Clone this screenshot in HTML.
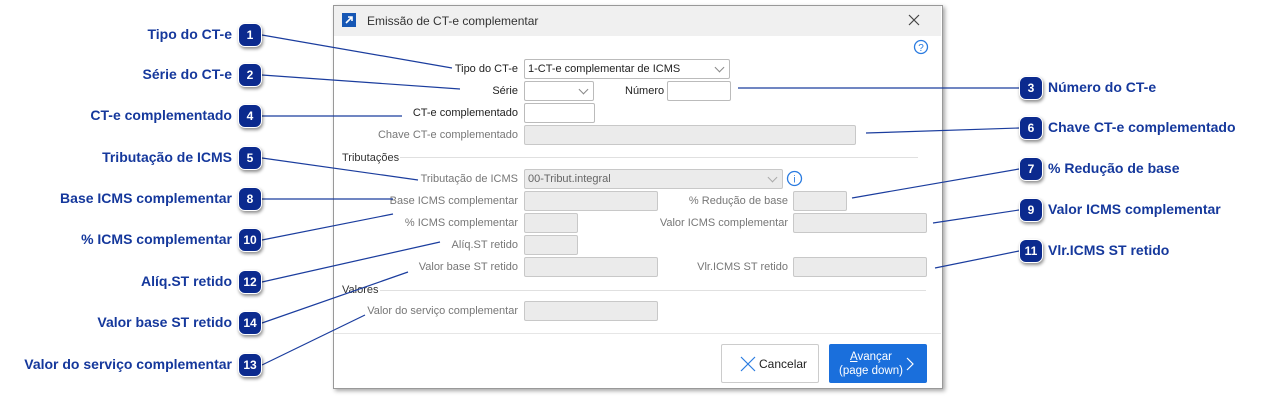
<!DOCTYPE html><html><head><meta charset="utf-8"><style>
body{margin:0;width:1261px;height:405px;background:#fff;position:relative;overflow:hidden;font-family:"Liberation Sans",sans-serif}
.a{position:absolute}
.b{position:absolute;width:22px;height:22px;border-radius:7px;background:#0b2a8e;color:#fff;font:bold 12px "Liberation Sans",sans-serif;text-align:center;line-height:22px;box-shadow:1px 2px 3px rgba(0,0,0,.45);border:1px solid #fff;z-index:3}
.ct{position:absolute;color:#15389c;font:bold 14px "Liberation Sans",sans-serif;white-space:nowrap}
.r{text-align:right;width:300px}
.l{position:absolute;font-size:11px;color:#222;text-align:right;width:200px;white-space:nowrap}
.d{color:#777}
.f{position:absolute;box-sizing:border-box;border:1px solid #c8c8c8;border-radius:2px;background:#ebebeb;height:20px}
.e{background:#fff;border-color:#bbb}
.f span{font-size:11px;position:absolute;left:3px;top:3px;color:#222}
.chev{position:absolute;right:6px;top:4px;width:6px;height:6px;border-right:1px solid #888;border-bottom:1px solid #888;transform:rotate(45deg)}
</style></head><body>
<!-- dialog -->
<div class="a" style="left:333px;top:5px;width:608px;height:382px;background:#fff;border:1px solid #999;box-shadow:2px 2px 4px rgba(0,0,0,.35)"></div>
<div class="a" style="left:334px;top:6px;width:607px;height:30px;background:#f0f0f0"></div>
<div class="a" style="left:342px;top:13px;width:14px;height:14px;background:#1657b5"></div>
<svg class="a" style="left:342px;top:13px" width="14" height="14"><path d="M4 10L10 4M6 4h4v4" stroke="#fff" stroke-width="1.6" fill="none"/></svg>
<div class="a" style="left:367px;top:14px;font-size:12px;color:#333">Emissão de CT-e complementar</div>
<svg class="a" style="left:908px;top:14px" width="12" height="12"><path d="M1 1L11 11M11 1L1 11" stroke="#444" stroke-width="1.2"/></svg>
<svg class="a" style="left:913px;top:39px" width="16" height="16"><circle cx="8" cy="8" r="6.5" stroke="#2a7be0" stroke-width="1.3" fill="none"/><text x="8" y="12" font-size="10" text-anchor="middle" fill="#2a7be0" font-family="Liberation Sans">?</text></svg>
<!-- rows -->
<div class="l" style="left:318px;top:63px">Tipo do CT-e</div>
<div class="f e" style="left:524px;top:59px;width:206px"><span>1-CT-e complementar de ICMS</span><i class="chev"></i></div>
<div class="l" style="left:318px;top:85px">Série</div>
<div class="f e" style="left:524px;top:81px;width:70px"><i class="chev"></i></div>
<div class="a" style="left:625px;top:85px;font-size:11px;color:#222">Número</div>
<div class="f e" style="left:667px;top:81px;width:64px"></div>
<div class="l" style="left:318px;top:107px">CT-e complementado</div>
<div class="f e" style="left:524px;top:103px;width:71px"></div>
<div class="l d" style="left:318px;top:129px">Chave CT-e complementado</div>
<div class="f" style="left:524px;top:125px;width:332px"></div>
<div class="a" style="left:342px;top:152px;font-size:11px;color:#333">Tributações</div>
<div class="a" style="left:400px;top:157px;width:518px;height:1px;background:#e0e0e0"></div>
<div class="l d" style="left:318px;top:173px">Tributação de ICMS</div>
<div class="f" style="left:524px;top:169px;width:259px"><span style="color:#666">00-Tribut.integral</span><i class="chev" style="border-color:#aaa"></i></div>
<svg class="a" style="left:786px;top:170px" width="17" height="17"><circle cx="8.5" cy="8.5" r="7" stroke="#2a7be0" stroke-width="1.3" fill="none"/><text x="8.5" y="12.5" font-size="10" text-anchor="middle" fill="#2a7be0" font-family="Liberation Sans">i</text></svg>
<div class="l d" style="left:318px;top:195px">Base ICMS complementar</div>
<div class="f" style="left:524px;top:191px;width:134px"></div>
<div class="l d" style="left:588px;top:195px">% Redução de base</div>
<div class="f" style="left:793px;top:191px;width:54px"></div>
<div class="l d" style="left:318px;top:217px">% ICMS complementar</div>
<div class="f" style="left:524px;top:213px;width:54px"></div>
<div class="l d" style="left:588px;top:217px">Valor ICMS complementar</div>
<div class="f" style="left:793px;top:213px;width:134px"></div>
<div class="l d" style="left:318px;top:239px">Alíq.ST retido</div>
<div class="f" style="left:524px;top:235px;width:54px"></div>
<div class="l d" style="left:318px;top:261px">Valor base ST retido</div>
<div class="f" style="left:524px;top:257px;width:134px"></div>
<div class="l d" style="left:588px;top:261px">Vlr.ICMS ST retido</div>
<div class="f" style="left:793px;top:257px;width:134px"></div>
<div class="a" style="left:342px;top:284px;font-size:11px;color:#333">Valores</div>
<div class="a" style="left:380px;top:290px;width:546px;height:1px;background:#e0e0e0"></div>
<div class="l d" style="left:318px;top:305px">Valor do serviço complementar</div>
<div class="f" style="left:524px;top:301px;width:134px"></div>
<div class="a" style="left:334px;top:333px;width:607px;height:1px;background:#e6e6e6"></div>
<div class="a" style="left:721px;top:344px;width:98px;height:39px;border:1px solid #ccc;border-radius:2px;box-sizing:border-box"></div>
<svg class="a" style="left:740px;top:356px" width="16" height="16"><path d="M1 1L15 15M15 1L1 15" stroke="#2a7be0" stroke-width="1.2"/></svg>
<div class="a" style="left:759px;top:357px;font-size:12px;color:#222">Cancelar</div>
<div class="a" style="left:829px;top:344px;width:98px;height:39px;background:#1a6fdc;border-radius:2px"></div>
<div class="a" style="left:836px;top:350px;width:70px;text-align:center;font-size:11.5px;color:#fff;line-height:14px"><u>A</u>vançar<br>(page down)</div>
<svg class="a" style="left:905px;top:356px" width="10" height="16"><path d="M2 2L8 8L2 14" stroke="#fff" stroke-width="1.2" fill="none"/></svg>
<svg class="a" style="left:0;top:0;z-index:2" width="1261" height="405"><g stroke="#1b3d9e" stroke-width="1.2" fill="none">
<line x1="262" y1="35" x2="452" y2="68"/><line x1="262" y1="75" x2="460" y2="89"/><line x1="262" y1="116" x2="402" y2="116"/><line x1="262" y1="158" x2="418" y2="180"/><line x1="262" y1="199" x2="393" y2="199"/><line x1="262" y1="240" x2="393" y2="214"/><line x1="262" y1="282" x2="440" y2="242"/><line x1="262" y1="323" x2="408" y2="272"/><line x1="262" y1="365" x2="365" y2="315"/>
<line x1="1019" y1="88" x2="738" y2="88"/><line x1="1019" y1="128" x2="866" y2="133"/><line x1="1019" y1="169" x2="852" y2="198"/><line x1="1019" y1="210" x2="933" y2="223"/><line x1="1019" y1="251" x2="935" y2="268"/></g></svg>
<!-- callouts left -->
<div class="ct r" style="left:-68px;top:26px">Tipo do CT-e</div><div class="b" style="left:238px;top:23px">1</div>
<div class="ct r" style="left:-68px;top:66px">Série do CT-e</div><div class="b" style="left:238px;top:63px">2</div>
<div class="ct r" style="left:-68px;top:107px">CT-e complementado</div><div class="b" style="left:238px;top:104px">4</div>
<div class="ct r" style="left:-68px;top:149px">Tributação de ICMS</div><div class="b" style="left:238px;top:146px">5</div>
<div class="ct r" style="left:-68px;top:190px">Base ICMS complementar</div><div class="b" style="left:238px;top:187px">8</div>
<div class="ct r" style="left:-68px;top:231px">% ICMS complementar</div><div class="b" style="left:238px;top:228px">10</div>
<div class="ct r" style="left:-68px;top:273px">Alíq.ST retido</div><div class="b" style="left:238px;top:270px">12</div>
<div class="ct r" style="left:-68px;top:314px">Valor base ST retido</div><div class="b" style="left:238px;top:311px">14</div>
<div class="ct r" style="left:-68px;top:356px">Valor do serviço complementar</div><div class="b" style="left:238px;top:353px">13</div>
<!-- right -->
<div class="b" style="left:1019px;top:76px">3</div><div class="ct" style="left:1048px;top:79px">Número do CT-e</div>
<div class="b" style="left:1019px;top:116px">6</div><div class="ct" style="left:1048px;top:119px">Chave CT-e complementado</div>
<div class="b" style="left:1019px;top:157px">7</div><div class="ct" style="left:1048px;top:160px">% Redução de base</div>
<div class="b" style="left:1019px;top:198px">9</div><div class="ct" style="left:1048px;top:201px">Valor ICMS complementar</div>
<div class="b" style="left:1019px;top:239px">11</div><div class="ct" style="left:1048px;top:242px">Vlr.ICMS ST retido</div>
</body></html>
